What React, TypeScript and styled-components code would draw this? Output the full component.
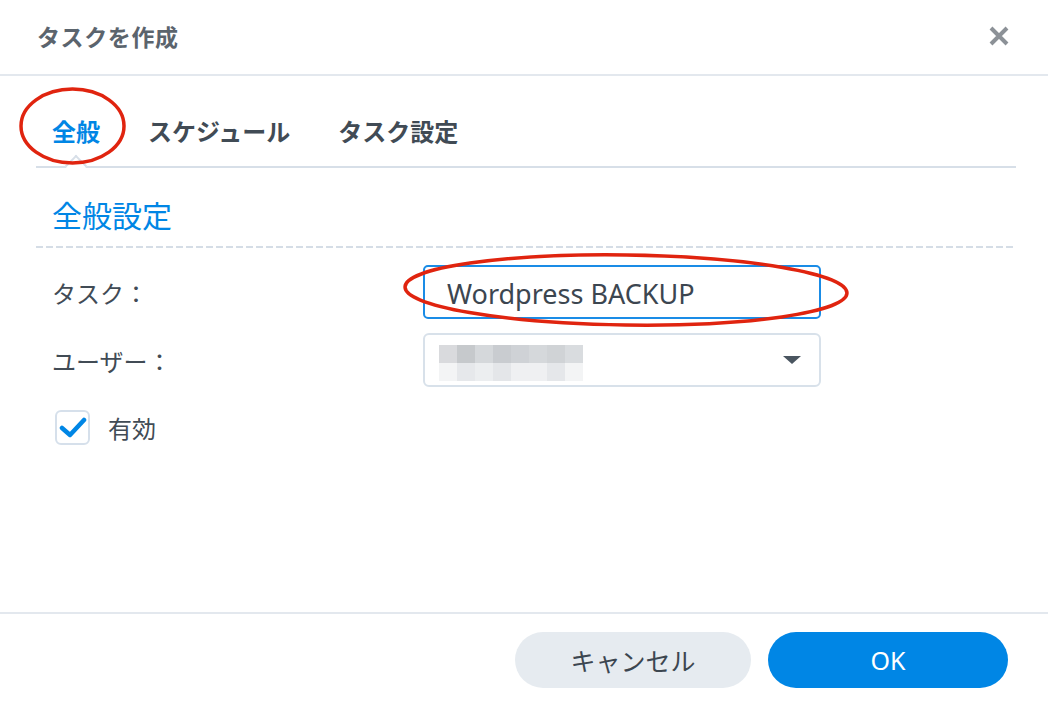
import React from "react";
import styled, { createGlobalStyle } from "styled-components";

const GlobalStyle = createGlobalStyle`
  html, body {
    margin: 0;
    padding: 0;
    background: #ffffff;
  }
  body {
    font-family: "Noto Sans", "Noto Sans CJK JP", sans-serif;
  }
`;

const BLUE = "#0086e5";
const TEXT = "#414b55";

const Dialog = styled.div`
  position: relative;
  width: 1048px;
  height: 706px;
  display: flex;
  flex-direction: column;
  background: #fff;
  overflow: hidden;
`;

const Header = styled.div`
  height: 76px;
  display: flex;
  align-items: center;
  justify-content: space-between;
  padding: 0 38px 2px 37px;
  border-bottom: 2px solid #e3e8ee;
  box-sizing: border-box;
  flex: none;
`;

const Title = styled.div`
  font-size: 23px;
  font-weight: 700;
  color: #5b646d;
  letter-spacing: 0.6px;
`;

const CloseButton = styled.button`
  border: none;
  background: none;
  padding: 0;
  width: 22px;
  height: 22px;
  cursor: pointer;
  display: flex;
`;

const Body = styled.div`
  flex: 1;
  padding: 0 32px 0 36px;
`;

const TabBar = styled.div`
  height: 92px;
  display: flex;
  align-items: flex-end;
  gap: 16px;
  border-bottom: 2px solid #d7dfe8;
  box-sizing: border-box;
`;

const Tab = styled.div<{ $active?: boolean }>`
  position: relative;
  padding: 0 16px 21px;
  font-size: 24px;
  line-height: 26px;
  font-weight: 700;
  color: ${(p) => (p.$active ? BLUE : TEXT)};
`;

const Notch = styled.span`
  position: absolute;
  left: 50%;
  bottom: -8px;
  width: 16px;
  height: 16px;
  background: #fff;
  border-top: 2px solid #d7dfe8;
  border-left: 2px solid #d7dfe8;
  transform: translateX(-50%) rotate(45deg);
  box-sizing: border-box;
`;

const SectionTitle = styled.div`
  position: relative;
  padding: 30px 16px 12px;
  font-size: 30px;
  line-height: 36px;
  color: ${BLUE};

  &::after {
    content: "";
    position: absolute;
    left: 0;
    right: 0;
    bottom: -2px;
    height: 2px;
    background: repeating-linear-gradient(
      90deg,
      #d5dde6 0 7px,
      transparent 7px 10px
    );
  }
`;

const Form = styled.div`
  padding: 19px 16px 0;
  display: flex;
  flex-direction: column;
  gap: 14px;
`;

const Row = styled.div`
  display: flex;
  align-items: center;
  height: 54px;
`;

const Label = styled.div`
  width: 371px;
  font-size: 24px;
  color: ${TEXT};
`;

const TextInput = styled.div`
  width: 398px;
  height: 54px;
  box-sizing: border-box;
  border: 2px solid #1a8ce6;
  border-radius: 5px;
  padding: 2px 22px 0;
  display: flex;
  align-items: center;
  font-size: 27px;
  color: #3c4650;
`;

const Select = styled.div`
  width: 398px;
  height: 54px;
  box-sizing: border-box;
  border: 2px solid #d8e1ea;
  border-radius: 6px;
  padding: 0 18px 0 14px;
  display: flex;
  align-items: center;
  justify-content: space-between;
`;

const Pixelated = styled.div`
  display: grid;
  grid-template-columns: repeat(8, 18px);
  grid-auto-rows: 18px;
  margin-top: 6px;
`;

const Pixel = styled.span<{ $c: string }>`
  background: ${(p) => p.$c};
`;

const Caret = styled.span`
  width: 0;
  height: 0;
  border-left: 9px solid transparent;
  border-right: 9px solid transparent;
  border-top: 8px solid #4a5560;
`;

const CheckRow = styled.label`
  display: flex;
  align-items: center;
  gap: 18px;
  margin-top: 9px;
  margin-left: 3px;
  font-size: 24px;
  color: ${TEXT};
`;

const CheckBox = styled.span`
  width: 35px;
  height: 35px;
  box-sizing: border-box;
  border: 2px solid #d6e0eb;
  border-radius: 6px;
  display: flex;
  align-items: center;
  justify-content: center;
`;

const Footer = styled.div`
  height: 94px;
  flex: none;
  border-top: 2px solid #e3e8ee;
  box-sizing: border-box;
  display: flex;
  justify-content: flex-end;
  align-items: flex-start;
  gap: 17px;
  padding: 18px 40px 0 0;
`;

const Button = styled.button<{ $primary?: boolean }>`
  height: 56px;
  border: none;
  border-radius: 28px;
  font-family: inherit;
  font-size: 25px;
  cursor: pointer;
  background: ${(p) => (p.$primary ? BLUE : "#e6ebf0")};
  color: ${(p) => (p.$primary ? "#fff" : "#3c4650")};
  width: ${(p) => (p.$primary ? "240px" : "236px")};
`;

const Annotations = styled.svg`
  position: absolute;
  inset: 0;
  pointer-events: none;
`;

const topPixels = ["#d9dadd", "#c6c9cc", "#d5d8db", "#c9ccd0", "#cfd2d6", "#d5d8db", "#d0d3d6", "#d9dcdf"];
const bottomPixels = ["#f3f4f5", "#e6e8eb", "#eceef0", "#e4e6e9", "#eff0f2", "#eff0f2", "#e5e7ea", "#f3f4f5"];

export default function App() {
  return (
    <>
      <GlobalStyle />
      <Dialog>
        <Header>
          <Title>タスクを作成</Title>
          <CloseButton aria-label="close">
            <svg width="22" height="22" viewBox="0 0 22 22">
              <path d="M3 3 L19 19 M19 3 L3 19" stroke="#8c9197" strokeWidth="4" />
            </svg>
          </CloseButton>
        </Header>

        <Body>
          <TabBar>
            <Tab $active>
              全般
              <Notch />
            </Tab>
            <Tab>スケジュール</Tab>
            <Tab>タスク設定</Tab>
          </TabBar>

          <SectionTitle>全般設定</SectionTitle>

          <Form>
            <Row>
              <Label>タスク：</Label>
              <TextInput>Wordpress BACKUP</TextInput>
            </Row>
            <Row>
              <Label>ユーザー：</Label>
              <Select>
                <Pixelated>
                  {topPixels.map((c, i) => (
                    <Pixel key={"t" + i} $c={c} />
                  ))}
                  {bottomPixels.map((c, i) => (
                    <Pixel key={"b" + i} $c={c} />
                  ))}
                </Pixelated>
                <Caret />
              </Select>
            </Row>
            <CheckRow>
              <CheckBox>
                <svg width="28" height="22" viewBox="0 0 28 22">
                  <path
                    d="M3 11 L11 18 L25 3"
                    fill="none"
                    stroke={BLUE}
                    strokeWidth="4.5"
                    strokeLinecap="round"
                    strokeLinejoin="round"
                  />
                </svg>
              </CheckBox>
              有効
            </CheckRow>
          </Form>
        </Body>

        <Footer>
          <Button>キャンセル</Button>
          <Button $primary>OK</Button>
        </Footer>

        <Annotations width="1048" height="706" viewBox="0 0 1048 706">
          <ellipse cx="72.5" cy="126" rx="51.5" ry="37" fill="none" stroke="#e0240f" strokeWidth="3.5" />
          <ellipse
            cx="626"
            cy="290"
            rx="221"
            ry="35"
            fill="none"
            stroke="#e0240f"
            strokeWidth="3.5"
            transform="rotate(0.8 626 290)"
          />
        </Annotations>
      </Dialog>
    </>
  );
}
